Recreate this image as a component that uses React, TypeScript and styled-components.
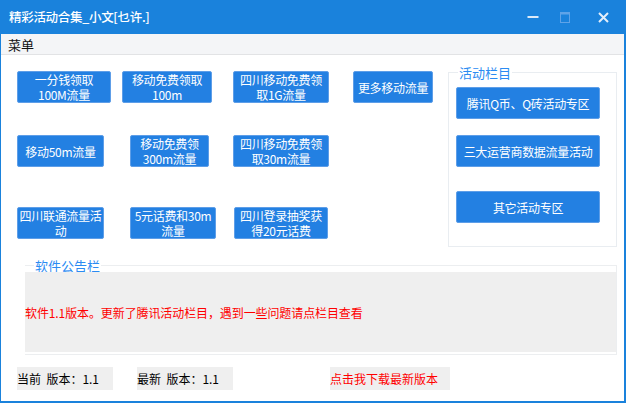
import React from 'react'
import styled, { createGlobalStyle } from 'styled-components'

const GlobalStyle = createGlobalStyle`
  html, body {
    margin: 0;
    padding: 0;
    background: #ffffff;
  }
  body {
    font-family: "Noto Sans CJK SC", "Noto Sans", sans-serif;
  }
`

const Window = styled.div`
  width: 626px;
  height: 403px;
  box-sizing: border-box;
  display: flex;
  flex-direction: column;
  background: #ffffff;
  border-left: 1px solid #1a82dc;
  border-right: 2px solid #1a82dc;
  border-bottom: 2px solid #1a82dc;
  overflow: hidden;
`

const TitleBar = styled.div`
  height: 34px;
  flex-shrink: 0;
  display: flex;
  align-items: center;
  background: #1a82dc;
  padding-left: 9px;
  margin-left: -1px;
  margin-right: -2px;
`

const Title = styled.div`
  flex: 1;
  color: #ffffff;
  font-size: 12.5px;
  font-family: "Noto Sans CJK SC", sans-serif;
  font-weight: 500;
  letter-spacing: -0.3px;
  padding-bottom: 1px;
`

const Controls = styled.div`
  display: flex;
  align-items: center;
  height: 100%;
`

const ControlBox = styled.div<{ $w: number }>`
  width: ${(p) => p.$w}px;
  height: 100%;
  display: flex;
  align-items: center;
  justify-content: center;
`

const MenuBar = styled.div`
  height: 20px;
  flex-shrink: 0;
  display: flex;
  align-items: center;
  background: #f4f5f7;
  border-bottom: 1px solid #e2e3e5;
  padding-left: 7px;
  font-size: 13px;
  color: #111111;
`

const Content = styled.div`
  flex: 1;
  display: flex;
  flex-direction: column;
`

const TopSection = styled.div`
  display: flex;
  align-items: flex-start;
`

const ButtonGrid = styled.div`
  margin-top: 16px;
  margin-left: 16px;
  display: grid;
  grid-template-columns: 105px 111px 120px 80px;
  grid-template-rows: 32px 32px 32px;
  row-gap: 32px;
`

const BlueButton = styled.button<{ $w: number; $offset?: number; $top?: number }>`
  width: ${(p) => p.$w}px;
  height: 32px;
  margin-left: ${(p) => p.$offset || 0}px;
  margin-top: ${(p) => p.$top || 0}px;
  box-sizing: border-box;
  padding: 0;
  background: #2380e2;
  border: 1px solid #5e9ee8;
  border-radius: 2px;
  color: #ffffff;
  font-family: "Noto Sans CJK SC", sans-serif;
  font-size: 12px;
  line-height: 15px;
  white-space: pre-line;
  letter-spacing: -0.3px;
  cursor: pointer;
`

const SideFieldset = styled.fieldset`
  margin: 9px 7px 0 auto;
  width: 169px;
  height: 183px;
  box-sizing: border-box;
  border: 1px solid #e9edf1;
  padding: 6px 0 0 7px;
  display: flex;
  flex-direction: column;
`

const Legend = styled.legend`
  margin-left: 2px;
  padding: 0 1px;
  font-size: 13px;
  line-height: 17px;
  color: #2b8bf2;
`

const SideButton = styled(BlueButton)`
  display: block;
`

const NoticeFieldset = styled.fieldset`
  margin: 10px 7px 0 24px;
  height: 98px;
  box-sizing: border-box;
  border: 1px solid #eceef0;
  border-left: none;
  padding: 0 0 2px 0;
  display: flex;
`

const NoticeLegend = styled(Legend)`
  margin-left: 9px;
`

const NoticeArea = styled.div`
  flex: 1;
  height: 80px;
  margin-top: -2px;
  background: #efefef;
  display: flex;
  align-items: center;
  color: #ff0000;
  font-size: 12px;
  letter-spacing: -0.1px;
`

const StatusRow = styled.div`
  display: flex;
  margin-top: 12px;
  margin-left: 16px;
`

const StatusBox = styled.div<{ $w: number; $gap?: number; $red?: boolean }>`
  width: ${(p) => p.$w}px;
  height: 23px;
  margin-left: ${(p) => p.$gap || 0}px;
  background: #efefef;
  display: flex;
  align-items: center;
  font-size: 12px;
  color: ${(p) => (p.$red ? '#ff0000' : '#000000')};
  white-space: pre;
`

const mainButtons = [
  { text: '一分钱领取\n100M流量', w: 94 },
  { text: '移动免费领取\n100m', w: 90 },
  { text: '四川移动免费领\n取1G流量', w: 96 },
  { text: '更多移动流量', w: 80 },
  { text: '移动50m流量', w: 87 },
  { text: '移动免费领\n300m流量', w: 79, offset: 8 },
  { text: '四川移动免费领\n取30m流量', w: 96 },
  { text: '', w: 0 },
  { text: '四川联通流量活\n动', w: 87, top: 8 },
  { text: '5元话费和30m\n流量', w: 86, offset: 8, top: 8 },
  { text: '四川登录抽奖获\n得20元话费', w: 94, offset: 1, top: 8 },
]

const App = () => {
  return (
    <>
      <GlobalStyle />
      <Window>
        <TitleBar>
          <Title>精彩活动合集_小文[乜许.]</Title>
          <Controls>
            <ControlBox $w={34}>
              <svg width="12" height="12" viewBox="0 0 12 12">
                <rect x="0.5" y="5" width="11" height="2" fill="#dbe9f8" />
              </svg>
            </ControlBox>
            <ControlBox $w={30}>
              <svg width="10" height="11" viewBox="0 0 10 11">
                <rect x="0.5" y="0.5" width="9" height="10" fill="none" stroke="#5fa3e8" />
                <rect x="0.5" y="0.5" width="9" height="2" fill="#5fa3e8" />
              </svg>
            </ControlBox>
            <ControlBox $w={46}>
              <svg width="11" height="11" viewBox="0 0 11 11">
                <path d="M1 1 L10 10 M10 1 L1 10" stroke="#e4eefa" strokeWidth="2" />
              </svg>
            </ControlBox>
          </Controls>
        </TitleBar>
        <MenuBar>菜单</MenuBar>
        <Content>
          <TopSection>
            <ButtonGrid>
              {mainButtons.map((b, i) =>
                b.w === 0 ? (
                  <span key={i} />
                ) : (
                  <BlueButton key={i} $w={b.w} $offset={b.offset} $top={b.top}>
                    {b.text}
                  </BlueButton>
                )
              )}
            </ButtonGrid>
            <SideFieldset>
              <Legend>活动栏目</Legend>
              <SideButton $w={144}>腾讯Q币、Q砖活动专区</SideButton>
              <SideButton $w={144} $top={16}>三大运营商数据流量活动</SideButton>
              <SideButton $w={144} $top={24}>其它活动专区</SideButton>
            </SideFieldset>
          </TopSection>
          <NoticeFieldset>
            <NoticeLegend>软件公告栏</NoticeLegend>
            <NoticeArea>软件1.1版本。更新了腾讯活动栏目，遇到一些问题请点栏目查看</NoticeArea>
          </NoticeFieldset>
          <StatusRow>
            <StatusBox $w={96}>当前  版本：1.1</StatusBox>
            <StatusBox $w={96} $gap={24}>最新  版本：1.1</StatusBox>
            <StatusBox $w={120} $gap={97} $red>点击我下载最新版本</StatusBox>
          </StatusRow>
        </Content>
      </Window>
    </>
  )
}

export default App
